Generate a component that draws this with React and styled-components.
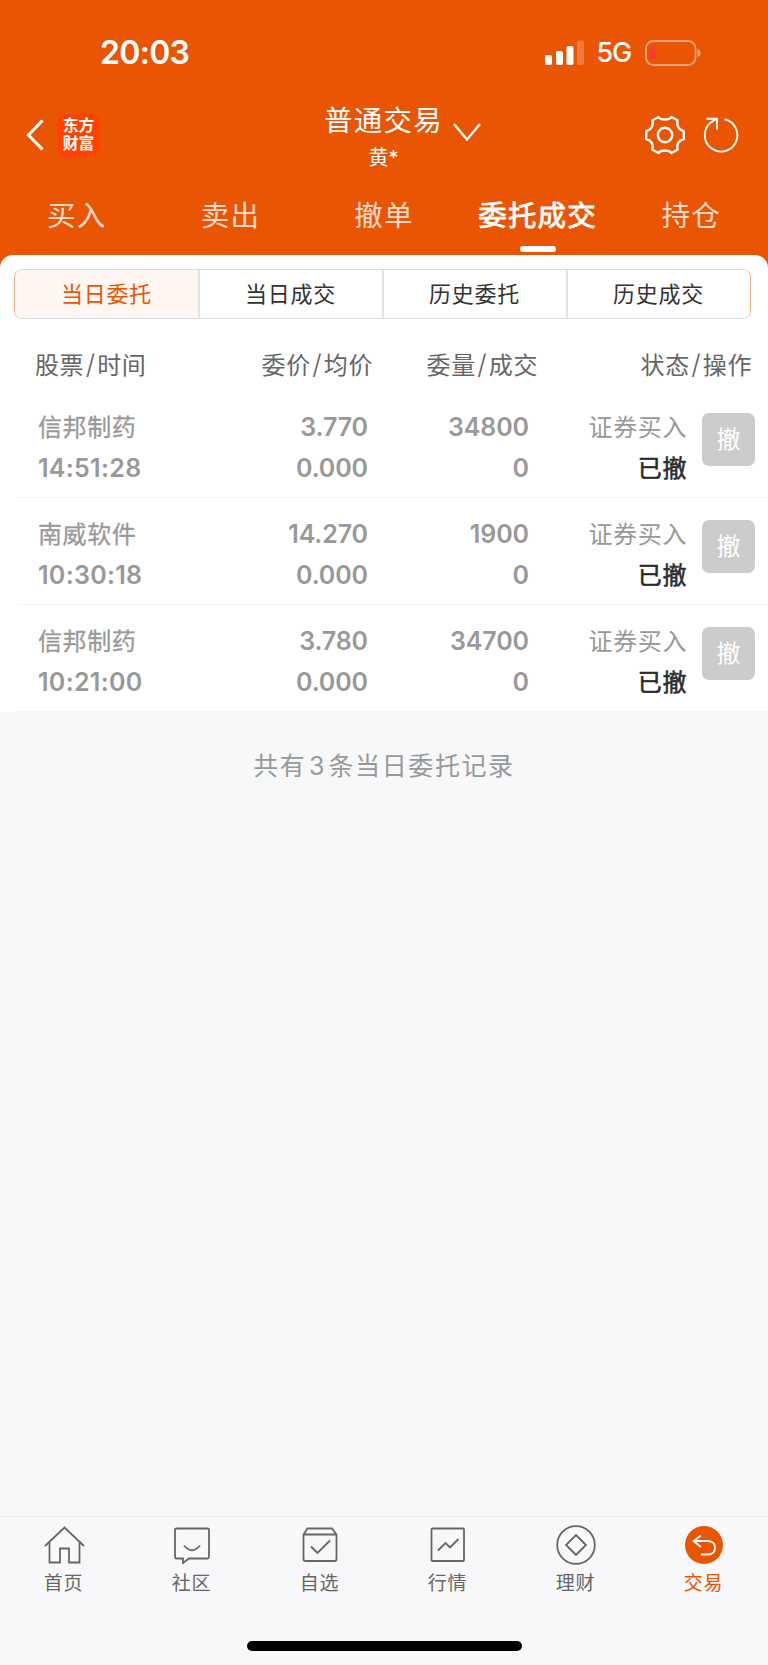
import React from "react";
import styled, { createGlobalStyle } from "styled-components";

const ORANGE = "#ea5504";

const GlobalStyle = createGlobalStyle`
  * { box-sizing: border-box; }
  body {
    margin: 0;
    background: #f7f8fa;
    font-family: "Inter", "Noto Sans CJK SC", sans-serif;
  }
`;

const Screen = styled.div`
  width: 768px;
  height: 1665px;
  display: flex;
  flex-direction: column;
  background: #f7f8fa;
  overflow: hidden;
`;

const Top = styled.header`
  height: 267px;
  margin-bottom: -12px;
  background: ${ORANGE};
  color: #fff;
  flex: none;
`;

const StatusBar = styled.div`
  height: 105px;
  padding: 0 67px 0 100px;
  display: flex;
  align-items: center;
  justify-content: space-between;
`;

const Clock = styled.div`
  font-size: 32px;
  font-weight: 600;
  line-height: 40px;
  letter-spacing: -0.7px;
`;

const Signals = styled.div`
  display: flex;
  align-items: center;
`;

const Network = styled.span`
  margin: 1px 14px 0 13px;
  font-size: 27px;
  font-weight: 500;
  line-height: 30px;
  letter-spacing: -1.2px;
`;

const NavBar = styled.div`
  height: 76px;
  padding: 0 29px 0 26px;
  display: grid;
  grid-template-columns: 1fr auto 1fr;
  align-items: center;
`;

const NavLeft = styled.div`
  display: flex;
  align-items: center;
  gap: 13px;
  margin-top: -16px;
`;

const Logo = styled.div`
  width: 43px;
  height: 43px;
  border-radius: 9px;
  background: #ff4200;
  font-size: 15.8px;
  font-weight: 700;
  line-height: 18px;
  text-align: center;
  padding-top: 3px;
`;

const Account = styled.div`
  display: flex;
  align-items: center;
  margin: -11px -19px 0 21px;
`;

const AccountText = styled.div`
  display: flex;
  flex-direction: column;
  align-items: center;
  width: 118px;
  margin-right: 10px;
`;

const Title = styled.div`
  font-size: 28.5px;
  line-height: 34px;
  letter-spacing: 1.3px;
  white-space: nowrap;
`;

const Owner = styled.div`
  font-size: 20px;
  line-height: 26px;
  margin-top: 7px;
`;

const NavRight = styled.div`
  display: flex;
  align-items: center;
  justify-content: flex-end;
  gap: 18px;
  margin-top: -16px;
`;

const Tabs = styled.nav`
  display: grid;
  grid-template-columns: repeat(5, 1fr);
`;

const Tab = styled.div`
  height: 71px;
  display: flex;
  flex-direction: column;
  align-items: center;
  padding-top: 15px;
  font-size: 28.5px;
  line-height: 40px;
  letter-spacing: 1.2px;
  -webkit-text-stroke: ${(p) => (p.$active ? "0.8px #fff" : "0")};
  color: ${(p) => (p.$active ? "#fff" : "rgba(255,255,255,.8)")};
  &::after {
    content: "";
    width: 36px;
    height: 6px;
    border-radius: 3px;
    margin: 10px 0 0 0;
    background: ${(p) => (p.$active ? "#fff" : "transparent")};
  }
`;

const Card = styled.main`
  background: #fff;
  border-radius: 13px 13px 0 0;
  padding-top: 14px;
  flex: none;
`;

const Segments = styled.div`
  height: 50px;
  margin: 0 17px 0 14px;
  display: grid;
  grid-template-columns: 183px 184px 184px 1fr;
  border: 1px solid #d9dde3;
  border-left-color: #f2b08c;
  border-right-color: #f2b08c;
  border-radius: 8px;
  overflow: hidden;
`;

const Segment = styled.div`
  font-size: 22px;
  line-height: 49px;
  letter-spacing: 0.8px;
  text-align: center;
  color: ${(p) => (p.$active ? ORANGE : "#333")};
  background: ${(p) => (p.$active ? "#fff5f1" : "#fff")};
  & + & { border-left: 2px solid #dfe2e7; padding-right: 1px; }
`;

const TableHead = styled.div`
  display: grid;
  grid-template-columns: 150px 223px 165px 1fr;
  height: 72px;
  padding: 11px 16px 0 0;
  font-size: 24px;
  line-height: 71px;
  letter-spacing: 0.6px;
  color: #666;
  text-align: right;
  & > :first-child { text-align: left; padding-left: 35px; }
`;

const Slash = styled.span`
  margin: 0 1.5px;
  font-size: 27px;
  font-weight: 300;
  line-height: 1;
`;

const Row = styled.div`
  height: 107px;
  margin-left: 18px;
  padding: 16px 13px 0 20px;
  display: grid;
  grid-template-columns: 130px 200px 161px 158px 1fr;
  border-bottom: 1px solid #f3f3f4;
`;

const Cell = styled.div`
  display: flex;
  flex-direction: column;
  align-items: ${(p) => (p.$left ? "flex-start" : "flex-end")};
  font-size: 25px;
  font-weight: 600;
  line-height: 41px;
  letter-spacing: ${(p) => (p.$left ? "0.3px" : "-0.1px")};
  color: #999;
`;

const Label = styled.span`
  font-size: 24px;
  font-weight: 400;
  letter-spacing: 0.6px;
  -webkit-text-stroke: 0.3px currentColor;
`;

const Side = styled(Label)`
  -webkit-text-stroke: 0;
`;

const State = styled(Label)`
  -webkit-text-stroke: 0.55px currentColor;
  color: #2b2b2b;
`;

const CancelButton = styled.button`
  width: 53px;
  height: 53px;
  margin: 6px 0 0 0;
  padding: 0;
  justify-self: end;
  border: 0;
  border-radius: 7px;
  background: #ccc;
  color: #fff;
  font: 400 24px/54px "Inter", "Noto Sans CJK SC", sans-serif;
`;

const Summary = styled.p`
  margin: 34px 0 0;
  text-align: center;
  font-size: 25px;
  line-height: 41px;
  letter-spacing: 1.6px;
  color: #999;
`;

const Count = styled.span`
  margin: 0 2.5px;
`;

const Bottom = styled.footer`
  height: 149px;
  margin-top: auto;
  border-top: 1px solid #e9eaec;
  background: #f8f8fb;
  display: flex;
  flex-direction: column;
  align-items: center;
  justify-content: space-between;
  padding-bottom: 14px;
`;

const Menu = styled.nav`
  width: 100%;
  display: grid;
  grid-template-columns: repeat(6, 1fr);
  padding-top: 8px;
`;

const MenuItem = styled.div`
  display: flex;
  flex-direction: column;
  align-items: center;
  color: ${(p) => (p.$active ? ORANGE : "#666")};
`;

const MenuLabel = styled.span`
  font-size: 19px;
  line-height: 28px;
  letter-spacing: 0.7px;
  margin: 5px 1px 0 0;
`;

const HomeBar = styled.div`
  width: 275px;
  height: 10px;
  border-radius: 5px;
  background: #000;
`;

const SignalIcon = () => (
  <svg width="39" height="26" viewBox="0 0 39 26" fill="#fff">
    <rect x="0" y="15" width="7" height="10" rx="2" />
    <rect x="11" y="11" width="7" height="14" rx="2" />
    <rect x="21.5" y="6" width="7" height="19" rx="2" />
    <rect x="32" y="0.5" width="7" height="24.5" rx="2" opacity=".22" />
  </svg>
);

const BatteryIcon = () => (
  <svg width="56" height="26" viewBox="0 0 56 26" fill="none">
    <rect x="1" y="1" width="49.5" height="24" rx="7.5" stroke="#fff" strokeOpacity=".45" strokeWidth="1.8" />
    <path d="M52.5 9q3 1.2 3 4t-3 4z" fill="#fff" fillOpacity=".5" />
    <rect x="4" y="6" width="6.5" height="14" rx="3" fill="#ff3b30" />
  </svg>
);

const BackIcon = () => (
  <svg width="18" height="32" viewBox="0 0 18 32" fill="none" stroke="#fff" strokeWidth="3.2">
    <path d="M16.5 1.5L2.5 16l14 14.5" />
  </svg>
);

const DownIcon = () => (
  <svg width="28" height="30" viewBox="0 0 28 30" fill="none" stroke="#fff" strokeWidth="2.3">
    <path d="M1 1l13 15.5L27 1" />
  </svg>
);

const GearIcon = () => (
  <svg width="40" height="40" viewBox="-20 -20 40 40" fill="none" stroke="#fff" strokeWidth="2.4" strokeLinejoin="round">
    <circle r="7.2" />
    <path d="M-6.3-18Q-5-15.500 0-15.500Q5-15.500 6.3-18L12.500-14.800Q11.500-11.500 13.200-7.800Q15-4.800 18.800-4V4Q15 4.800 13.200 7.800Q11.500 11.500 12.500 14.800L6.300 18Q5 15.500 0 15.500Q-5 15.500-6.300 18L-12.500 14.800Q-11.500 11.500-13.200 7.800Q-15 4.800-18.800 4V-4Q-15-4.800-13.200-7.800Q-11.500-11.500-12.500-14.800Z" />
  </svg>
);

const RefreshIcon = () => (
  <svg width="36" height="36" viewBox="0 0 36 36" fill="none" stroke="#fff" strokeWidth="1.9">
    <path d="M21.5 2.3A16.3 16.3 0 1 1 7.8 5.6L13.5 1.8M3.5 1.8H14V12.5" />
  </svg>
);

const ICONS = {
  home: <path d="M1 21L20.500 2.500L40 21M5.500 17.500V37.500H16V23.500H25V37.500H35.500V17.500" />,
  community: <path d="M4.500 3.500H35.500Q37 3.500 37 5V32Q37 33.500 35.500 33.500H17L11 38V33.500H4.500Q3 33.500 3 32V5Q3 3.500 4.500 3.500ZM12 20.500Q20 30 28 20.500" />,
  watchlist: <path d="M3.500 9.500L7.500 3.500H32L36.500 9.500V34Q36.500 36 34.500 36H5.500Q3.500 36 3.500 34ZM3.500 9.500H36.500M11 21.500L17.500 28L30 15.500" />,
  market: <path d="M4.500 3.500H35Q36 3.500 36 4.500V35Q36 36 35 36H4.500Q3.500 36 3.500 35V4.500Q3.500 3.500 4.500 3.500ZM10 25.500L17.500 18L22 22.500L30.500 14" />,
  wealth: (
    <>
      <circle cx="20" cy="20" r="18.8" />
      <path d="M20 10L30 20L20 30L10 20Z" />
    </>
  ),
  trade: (
    <>
      <circle cx="20" cy="20" r="19" fill={ORANGE} stroke="none" />
      <path d="M17 10.500L9.500 16L17 22M9.500 16H24Q31 16.500 31 22.500Q31 29.500 24 29.500H17" stroke="#fff" />
    </>
  ),
};

const MenuIcon = ({ name }) => (
  <svg width="41" height="40" viewBox="0 0 41 40" fill="none" stroke="currentColor" strokeWidth="1.8">
    {ICONS[name]}
  </svg>
);

const TABS = ["买入", "卖出", "撤单", "委托成交", "持仓"];
const SEGMENTS = ["当日委托", "当日成交", "历史委托", "历史成交"];
const HEADS = [["股票", "时间"], ["委价", "均价"], ["委量", "成交"], ["状态", "操作"]];
const ORDERS = [
  { name: "信邦制药", time: "14:51:28", price: "3.770", qty: "34800" },
  { name: "南威软件", time: "10:30:18", price: "14.270", qty: "1900" },
  { name: "信邦制药", time: "10:21:00", price: "3.780", qty: "34700" },
];
const MENU = [
  ["home", "首页"],
  ["community", "社区"],
  ["watchlist", "自选"],
  ["market", "行情"],
  ["wealth", "理财"],
  ["trade", "交易"],
];

export default function App() {
  return (
    <Screen>
      <GlobalStyle />
      <Top>
        <StatusBar>
          <Clock>20:03</Clock>
          <Signals>
            <SignalIcon />
            <Network>5G</Network>
            <BatteryIcon />
          </Signals>
        </StatusBar>
        <NavBar>
          <NavLeft>
            <BackIcon />
            <Logo>东方<br />财富</Logo>
          </NavLeft>
          <Account>
            <AccountText>
              <Title>普通交易</Title>
              <Owner>黄*</Owner>
            </AccountText>
            <DownIcon />
          </Account>
          <NavRight>
            <GearIcon />
            <RefreshIcon />
          </NavRight>
        </NavBar>
        <Tabs>
          {TABS.map((t) => (
            <Tab key={t} $active={t === "委托成交"}>{t}</Tab>
          ))}
        </Tabs>
      </Top>
      <Card>
        <Segments>
          {SEGMENTS.map((s, i) => (
            <Segment key={s} $active={i === 0}>{s}</Segment>
          ))}
        </Segments>
        <TableHead>
          {HEADS.map(([a, b]) => (
            <div key={a}>{a}<Slash>/</Slash>{b}</div>
          ))}
        </TableHead>
        {ORDERS.map((o) => (
          <Row key={o.time}>
            <Cell $left><Label>{o.name}</Label><span>{o.time}</span></Cell>
            <Cell><span>{o.price}</span><span>0.000</span></Cell>
            <Cell><span>{o.qty}</span><span>0</span></Cell>
            <Cell><Side>证券买入</Side><State>已撤</State></Cell>
            <CancelButton>撤</CancelButton>
          </Row>
        ))}
      </Card>
      <Summary>共有<Count>3</Count>条当日委托记录</Summary>
      <Bottom>
        <Menu>
          {MENU.map(([icon, label]) => (
            <MenuItem key={icon} $active={icon === "trade"}>
              <MenuIcon name={icon} />
              <MenuLabel>{label}</MenuLabel>
            </MenuItem>
          ))}
        </Menu>
        <HomeBar />
      </Bottom>
    </Screen>
  );
}
